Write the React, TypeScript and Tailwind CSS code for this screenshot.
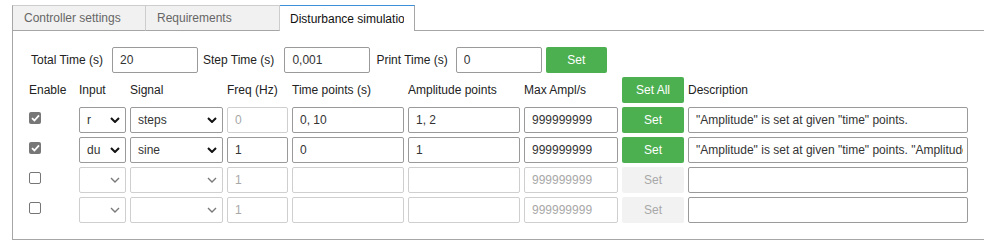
import React from "react";

interface Row {
  checked: boolean;
  input: string;
  signal: string;
  freq: string;
  freqDisabled: boolean;
  time: string;
  amp: string;
  max: string;
  active: boolean;
  desc: string;
}

const rows: Row[] = [
  {
    checked: true,
    input: "r",
    signal: "steps",
    freq: "0",
    freqDisabled: true,
    time: "0, 10",
    amp: "1, 2",
    max: "999999999",
    active: true,
    desc: '"Amplitude" is set at given "time" points.',
  },
  {
    checked: true,
    input: "du",
    signal: "sine",
    freq: "1",
    freqDisabled: false,
    time: "0",
    amp: "1",
    max: "999999999",
    active: true,
    desc: '"Amplitude" is set at given "time" points. "Amplitude" is the sine amplitude.',
  },
  { checked: false, input: "", signal: "", freq: "1", freqDisabled: true, time: "", amp: "", max: "999999999", active: false, desc: "" },
  { checked: false, input: "", signal: "", freq: "1", freqDisabled: true, time: "", amp: "", max: "999999999", active: false, desc: "" },
];

const Chevron = ({ dim }: { dim?: boolean }) => (
  <svg
    width="10"
    height="6"
    viewBox="0 0 10 6"
    className="pointer-events-none absolute right-[6px] top-[10px]"
  >
    <path
      d="M1 1l4 4 4-4"
      fill="none"
      stroke={dim ? "#7a7a7a" : "#111"}
      strokeWidth={dim ? 1.4 : 2}
    />
  </svg>
);

const Field = ({ value, dim, textDim }: { value: string; dim?: boolean; textDim?: boolean }) => (
  <input
    readOnly
    value={value}
    className={
      "h-[26px] w-full rounded-[2px] border bg-white pl-[7px] pr-[4px] outline-none " +
      (dim ? "border-[#cfcfcf] " : "border-[#9a9a9a] ") +
      (textDim ? "text-[#a8a8a8]" : "text-[#333]")
    }
  />
);

const Select = ({ value, dim }: { value: string; dim?: boolean }) => (
  <div className="relative h-[26px] w-full">
    <div
      className={
        "h-full w-full rounded-[2px] border bg-white pl-[7px] leading-[24px] text-[#333] " +
        (dim ? "border-[#cfcfcf]" : "border-[#9a9a9a]")
      }
    >
      {value}
    </div>
    <Chevron dim={dim} />
  </div>
);

const Check = ({ checked }: { checked: boolean }) =>
  checked ? (
    <span className="mt-[5px] flex h-[12px] w-[12px] items-center justify-center self-start rounded-[2px] bg-[#777]">
      <svg width="9" height="8" viewBox="0 0 9 8">
        <path d="M1 4.2l2.4 2.3L8 1.3" fill="none" stroke="#fff" strokeWidth="1.8" />
      </svg>
    </span>
  ) : (
    <span className="mt-[5px] h-[12px] w-[12px] self-start rounded-[2px] border border-[#767676] bg-white" />
  );

const SetButton = ({ label, on }: { label: string; on: boolean }) => (
  <button
    className={
      "h-[26px] w-full rounded-[2px] " +
      (on ? "bg-[#4caf50] text-white" : "bg-[#f2f2f2] text-[#a8a8a8]")
    }
  >
    {label}
  </button>
);

const tabs = ["Controller settings", "Requirements", "Disturbance simulation"];

export default function App() {
  return (
    <div className="h-[240px] w-[984px] overflow-hidden bg-white pl-[12px] pt-[5px] text-[12px] text-[#222] [font-family:'Liberation_Sans',Arial,sans-serif]">
      <div className="relative z-10 -mb-px flex h-[26px]">
        {tabs.map((t, i) => {
          const active = i === 2;
          return (
            <div
              key={t}
              className={
                "flex h-[26px] items-center border-t border-r px-[10px] " +
                (i === 0 ? "border-l border-l-[#a6a6a6] " : "") +
                (active
                  ? "w-[135px] border-t-[#3d8fdc] border-r-[#a6a6a6] bg-white text-[#111]"
                  : "w-[134px] border-b border-t-[#cdcdcd] border-r-[#cdcdcd] border-b-[#a6a6a6] bg-[#f1f1f1] pl-[11px] text-[#666]")
              }
            >
              <span className="block overflow-hidden whitespace-nowrap">{t}</span>
            </div>
          );
        })}
      </div>
      <div className="h-[210px] w-[990px] border-t border-b border-l border-[#a6a6a6] pl-[16px] pt-[16px]">
        <div className="ml-[2px] flex h-[26px] items-center">
          <span>Total Time (s)</span>
          <div className="ml-[9px] w-[86px]">
            <Field value="20" />
          </div>
          <span className="ml-[5px]">Step Time (s)</span>
          <div className="ml-[10px] w-[86px]">
            <Field value="0,001" />
          </div>
          <span className="ml-[6px]">Print Time (s)</span>
          <div className="ml-[8px] w-[86px]">
            <Field value="0" />
          </div>
          <div className="ml-[4px] w-[61px]">
            <SetButton label="Set" on />
          </div>
        </div>

        <div className="mt-[4px] grid grid-cols-[46px_47px_93px_61px_112px_112px_94px_62px_280px] gap-x-[4px] gap-y-[4px]">
          <div className="flex h-[26px] items-center">Enable</div>
          <div className="flex h-[26px] items-center">Input</div>
          <div className="flex h-[26px] items-center">Signal</div>
          <div className="flex h-[26px] items-center">Freq (Hz)</div>
          <div className="flex h-[26px] items-center">Time points (s)</div>
          <div className="flex h-[26px] items-center">Amplitude points</div>
          <div className="flex h-[26px] items-center">Max Ampl/s</div>
          <SetButton label="Set All" on />
          <div className="flex h-[26px] items-center">Description</div>

          {rows.map((r, i) => (
            <React.Fragment key={i}>
              <div className="flex h-[26px]">
                <Check checked={r.checked} />
              </div>
              <Select value={r.input} dim={!r.active} />
              <Select value={r.signal} dim={!r.active} />
              <Field value={r.freq} dim={r.freqDisabled} textDim={r.freqDisabled} />
              <Field value={r.time} dim={!r.active} />
              <Field value={r.amp} dim={!r.active} />
              <Field value={r.max} dim={!r.active} textDim={!r.active} />
              <SetButton label="Set" on={r.active} />
              <Field value={r.desc} />
            </React.Fragment>
          ))}
        </div>
      </div>
    </div>
  );
}
